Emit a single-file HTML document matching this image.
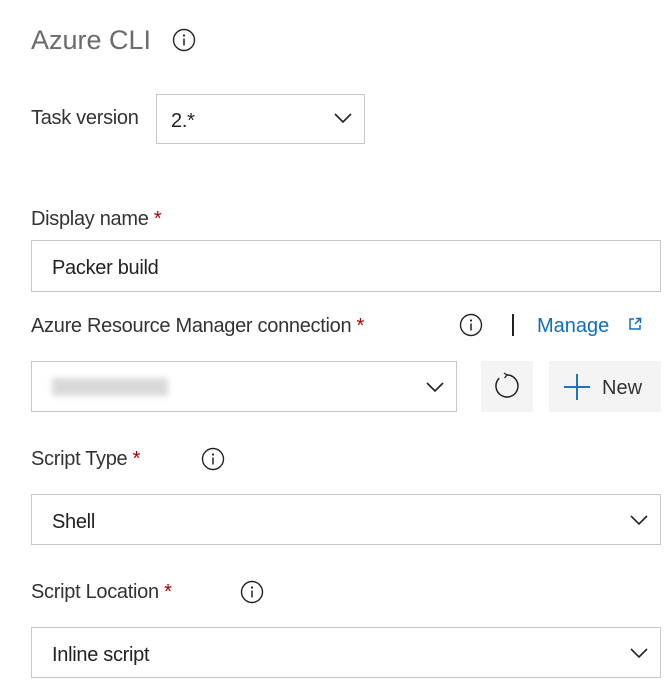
<!DOCTYPE html>
<html><head><style>
body{margin:0;width:669px;height:682px;background:#fff;font-family:"Liberation Sans",sans-serif;color:#333;position:relative;overflow:hidden}
.a{position:absolute;white-space:nowrap}
.lbl{font-size:20px;color:#333;letter-spacing:-0.3px}
.req{color:#a80000}
.box{position:absolute;border:1px solid #c8c8c8;box-sizing:border-box;background:#fff}
.txt{position:absolute;left:20px;font-size:20px;color:#222;top:15px;letter-spacing:-0.3px}
.chev{position:absolute;right:12px;top:18px}
.btn{position:absolute;background:#f4f4f4}
</style></head><body>
<div class="a" style="left:31px;top:25px;font-size:27px;color:#6b6b6b">Azure CLI</div>
<svg class="a" style="left:172px;top:28px" width="24" height="24"><circle cx="12" cy="12" r="10.5" fill="none" stroke="#222" stroke-width="1.4"/><circle cx="12" cy="7.5" r="1.1" fill="#222"/><path d="M12 10.5v7" stroke="#222" stroke-width="1.5"/></svg>

<div class="a lbl" style="left:31px;top:107px">Task version</div>
<div class="box" style="left:156px;top:94px;width:209px;height:50px"><div class="txt" style="left:14px">2.*</div>
<svg class="chev" width="18" height="11"><path d="M1 1l8 8 8-8" fill="none" stroke="#222" stroke-width="1.6"/></svg></div>

<div class="a lbl" style="left:31px;top:208px">Display name <span class="req">*</span></div>
<div class="box" style="left:31px;top:240px;width:630px;height:52px"><div class="txt" style="top:16px">Packer build</div></div>

<div class="a lbl" style="left:31px;top:315px">Azure Resource Manager connection <span class="req">*</span></div>
<svg class="a" style="left:459px;top:313px" width="24" height="24"><circle cx="12" cy="12" r="10.5" fill="none" stroke="#222" stroke-width="1.4"/><circle cx="12" cy="7.5" r="1.1" fill="#222"/><path d="M12 10.5v7" stroke="#222" stroke-width="1.5"/></svg>
<div class="a" style="left:512px;top:314px;width:1.5px;height:22px;background:#222"></div>
<div class="a" style="left:537px;top:315px;font-size:20px;color:#106ebe">Manage</div>
<svg class="a" style="left:628px;top:317px" width="14" height="14"><path d="M6 2H2v10h10V8" fill="none" stroke="#106ebe" stroke-width="1.5"/><path d="M7 7l5-5M8 1.5h4.5V6" fill="none" stroke="#106ebe" stroke-width="1.5"/></svg>

<div class="box" style="left:31px;top:361px;width:426px;height:51px">
<div class="a" style="left:20px;top:16px;width:116px;height:18px;background:#bbb;filter:blur(3px);opacity:.55"></div>
<svg class="chev" style="top:20px" width="18" height="11"><path d="M1 1l8 8 8-8" fill="none" stroke="#222" stroke-width="1.6"/></svg></div>
<div class="btn" style="left:481px;top:361px;width:52px;height:51px"><svg class="a" style="left:12px;top:11px" width="28" height="28"><path d="M14 3A11 11 0 1 1 6.2 6.2" fill="none" stroke="#222" stroke-width="1.5"/><path d="M14 3L11 1M14 3L11.5 6" fill="none" stroke="#222" stroke-width="1.3"/></svg></div>
<div class="btn" style="left:549px;top:361px;width:112px;height:51px">
<svg class="a" style="left:14px;top:12px" width="28" height="28"><path d="M14 1v26M1 14h26" stroke="#1e73c3" stroke-width="2"/></svg>
<div class="a" style="left:53px;top:16px;font-size:20px;color:#333">New</div></div>

<div class="a lbl" style="left:31px;top:448px">Script Type <span class="req">*</span></div>
<svg class="a" style="left:201px;top:447px" width="24" height="24"><circle cx="12" cy="12" r="10.5" fill="none" stroke="#222" stroke-width="1.4"/><circle cx="12" cy="7.5" r="1.1" fill="#222"/><path d="M12 10.5v7" stroke="#222" stroke-width="1.5"/></svg>
<div class="box" style="left:31px;top:494px;width:630px;height:51px"><div class="txt" style="top:16px">Shell</div>
<svg class="chev" style="top:20px" width="18" height="11"><path d="M1 1l8 8 8-8" fill="none" stroke="#222" stroke-width="1.6"/></svg></div>

<div class="a lbl" style="left:31px;top:581px">Script Location <span class="req">*</span></div>
<svg class="a" style="left:240px;top:580px" width="24" height="24"><circle cx="12" cy="12" r="10.5" fill="none" stroke="#222" stroke-width="1.4"/><circle cx="12" cy="7.5" r="1.1" fill="#222"/><path d="M12 10.5v7" stroke="#222" stroke-width="1.5"/></svg>
<div class="box" style="left:31px;top:627px;width:630px;height:51px"><div class="txt" style="top:16px">Inline script</div>
<svg class="chev" style="top:20px" width="18" height="11"><path d="M1 1l8 8 8-8" fill="none" stroke="#222" stroke-width="1.6"/></svg></div>
</body></html>
